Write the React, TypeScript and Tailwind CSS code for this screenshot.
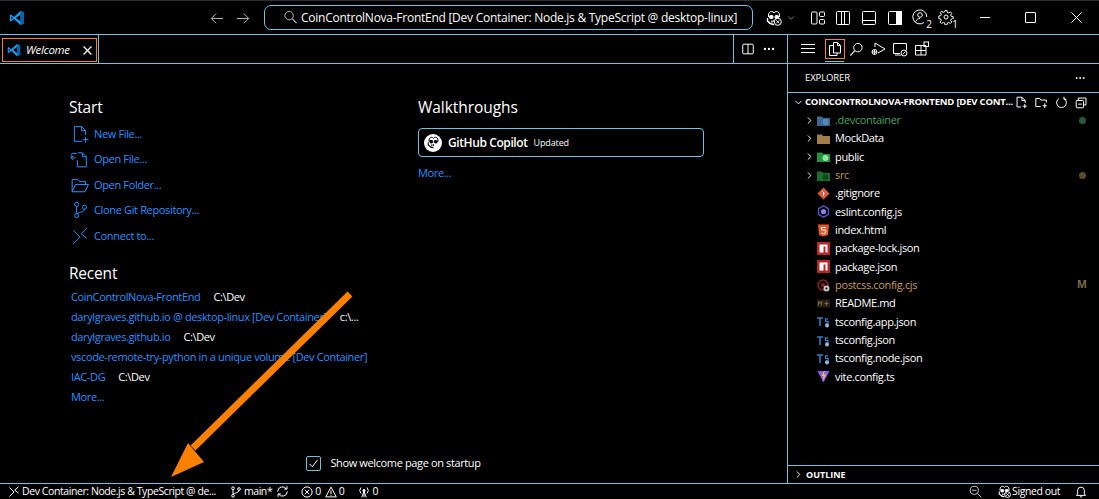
import type { ReactNode } from "react";
import { ChevronDown, ChevronRight, Ellipsis } from "lucide-react";

const font = { fontFamily: '"Open Sans", "Liberation Sans", sans-serif' };

function Ico({ size = 16, className = "", children }: { size?: number; className?: string; children: ReactNode }) {
  return (
    <svg width={size} height={size} viewBox="0 0 16 16" fill="none" stroke="currentColor" strokeWidth={16 / size} className={"shrink-0 " + className}>
      {children}
    </svg>
  );
}

function VsLogo({ size = 16 }: { size?: number }) {
  return (
    <svg width={size} height={size} viewBox="0 0 16 16" className="shrink-0">
      <path d="M11.4 1 5 7 2 4.6.8 5.3v5.4l1.2.7L5 9l6.4 6 3.6-1.6V2.6L11.4 1z" fill="#1f9cf0" />
      <path d="M11.5 4.6v6.8L6.9 8l4.6-3.4zM2.1 6.3 3.8 8 2.1 9.7V6.3z" fill="#000" />
      <path d="M11.4 1 15 2.6v10.8L11.4 15z" fill="#0065a9" />
    </svg>
  );
}

function CopilotIcon({ size = 16, badge = false }: { size?: number; badge?: boolean }) {
  return (
    <Ico size={size}>
      <path d="M2.5 7V5c0-2 1.5-3.5 3-3.5 1 0 2 .5 2.500 1.300C8.500 2 9.500 1.500 10.500 1.500c1.500 0 3 1.500 3 3.500v2" />
      <path d="M1.500 8v3c2 2.500 4 3.500 6.500 3.500" strokeWidth="1.400" />
      <rect x="3.500" y="5.500" width="3.500" height="3" rx="1" fill="currentColor" />
      <rect x="9" y="5.500" width="3.500" height="3" rx="1" fill="currentColor" />
      <path d="M6 10.500v2M8 10v2" strokeWidth="1.400" />
      {badge && (
        <>
          <circle cx="11.800" cy="11.800" r="3.500" fill="#000" />
          <path d="M10.300 10.300l3 3M13.300 10.300l-3 3" />
        </>
      )}
    </Ico>
  );
}

function TitleBar() {
  return (
    <div className="h-[35px] shrink-0 flex items-center text-white border-b border-[#6fc3df] border-t-[#2e2e2e] border-t">
      <div className="ml-[9px]"><VsLogo size={16} /></div>
      <Ico size={14} className="ml-[185px] text-[#b8b8b8]"><path d="M15 8.500H1.500M7 3l-5.500 5.500L7 14" /></Ico>
      <Ico size={14} className="ml-[12px] text-[#b8b8b8]"><path d="M1 8.500h13.500M9 3l5.500 5.500L9 14" /></Ico>
      <div className="ml-[14px] w-[489px] h-[25px] rounded-[7px] border border-[#6fc3df] flex items-center pl-[18px]">
        <Ico size={15} className="text-[#b8b8b8] -scale-x-100">
          <circle cx="9.500" cy="6" r="4.500" />
          <path d="M6.200 9.200 1.500 14" strokeWidth="1.400" />
        </Ico>
        <span className="ml-[3px] text-[12px] tracking-[-0.26px] whitespace-nowrap">
          CoinControlNova-FrontEnd [Dev Container: Node.js &amp; TypeScript @ desktop-linux]
        </span>
      </div>
      <div className="ml-[13px]"><CopilotIcon badge /></div>
      <ChevronDown size={10} strokeWidth={1.500} className="ml-[4px] text-[#c0c0c0]" />
      <Ico className="ml-[14px]">
        <rect x="1.500" y="2" width="5.500" height="12" rx="1" />
        <rect x="9.500" y="2" width="5" height="4.500" rx="1" />
        <rect x="9.500" y="9.500" width="5" height="4.500" rx="1" />
      </Ico>
      <Ico className="ml-[9px]">
        <rect x="1.500" y="1.500" width="13" height="13" rx="1" />
        <path d="M6.500 1.500v13M9.500 1.500v13" />
      </Ico>
      <Ico className="ml-[10px]">
        <rect x="1.500" y="1.500" width="13" height="13" rx="1" />
        <path d="M1.500 10.500h13" />
      </Ico>
      <Ico className="ml-[10px]">
        <rect x="1.500" y="1.500" width="13" height="13" rx="1" />
        <rect x="9.500" y="1.500" width="5" height="13" fill="currentColor" />
      </Ico>
      <div className="ml-[9px] relative w-[17px] h-[17px]">
        <Ico size={16}>
          <path d="M12 13.500A7 7 0 1 1 14.800 8" />
          <circle cx="8" cy="6" r="2.300" />
          <path d="M3.800 12.500c.6-2 2.200-3 4.200-3" />
        </Ico>
        <span className="absolute right-[-3px] bottom-[-3px] text-[10px] leading-[10px] bg-black">2</span>
      </div>
      <div className="ml-[9px] relative w-[17px] h-[17px]">
        <Ico size={16}>
          <path d="M7 1.500h2l.4 2 1.300.5 1.700-1.100 1.400 1.400-1.100 1.700.5 1.300 2 .4v2l-2 .4-.5 1.300 1.100 1.700-1.400 1.400-1.700-1.100-1.300.5-.4 2H7l-.4-2-1.300-.5-1.700 1.100-1.400-1.400 1.100-1.700-.5-1.300-2-.4V7l2-.4.5-1.300-1.100-1.700 1.400-1.400 1.700 1.100 1.300-.5z" />
          <circle cx="8" cy="8" r="2" />
        </Ico>
        <span className="absolute right-[-3px] bottom-[-3px] text-[10px] leading-[10px] bg-black">1</span>
      </div>
      <div className="ml-auto flex items-center">
        <div className="w-[10px] h-[1px] bg-white" />
        <div className="ml-[35px] w-[11px] h-[11px] border border-white rounded-[1px]" />
        <Ico size={11} className="ml-[35px] mr-[17px]"><path d="M.5.5l15 15M15.500.5l-15 15" /></Ico>
      </div>
    </div>
  );
}

function TabBar() {
  return (
    <div className="h-[29px] shrink-0 flex border-b border-[#6fc3df]">
      <div className="w-[99px] border-r border-[#6fc3df] pl-[2px] pt-[3px]">
        <div className="w-[95px] h-[24px] border border-[#f38518] flex items-center pl-[4px] pr-[4px] text-white">
          <VsLogo size={14} />
          <span className="ml-[5px] italic text-[11.500px] tracking-[-0.3px]">Welcome</span>
          <Ico size={9} className="ml-auto"><path d="M1 1l14 14M15 1 1 15" strokeWidth="2.200" /></Ico>
        </div>
      </div>
      <div className="flex-1" />
      <div className="w-[54px] border-l border-[#6fc3df] flex items-center pl-[7px] text-white">
        <Ico size={14}>
          <rect x="2" y="2.500" width="12" height="11" rx="1" />
          <path d="M8 2.500v11" />
        </Ico>
        <Ellipsis size={14} strokeWidth={2} className="ml-[7px]" />
      </div>
    </div>
  );
}

const startItems: [string, ReactNode][] = [
  ["New File...", <><path d="M9.500 1.500H3v13h7" /><path d="M9.500 1.500V5h3.500v4M9.500 1.500 13 5" /><path d="M13 10.500v5M10.500 13h5" /></>],
  ["Open File...", <><path d="M7 2.500h4l3.500 3.500v9h-8V9" /><path d="M11 2.500V6h3.500" /><path d="M6 3H2.500C1.500 3 1 4 1 5s.5 2 1.500 2H5M3 5 1 7l2 2" /></>],
  ["Open Folder...", <><path d="M1 14V3h5l1.500 2H13v2.500" /><path d="M1 14h11.500L15.500 7.500H4L1 14z" /></>],
  ["Clone Git Repository...", <><circle cx="5" cy="3" r="1.800" /><circle cx="5" cy="13" r="1.800" /><circle cx="12" cy="5.500" r="1.800" /><path d="M5 4.800v6.400M12 7.300c0 2.200-4 2.500-7 4" /></>],
  ["Connect to...", <path d="M2 15l6-6-6-6M14 1 9 6l5 4" />],
];

const recents: [string, string][] = [
  ["CoinControlNova-FrontEnd", "C:\\Dev"],
  ["darylgraves.github.io @ desktop-linux [Dev Container]", "c:\\..."],
  ["darylgraves.github.io", "C:\\Dev"],
  ["vscode-remote-try-python in a unique volume [Dev Container]", ""],
  ["IAC-DG", "C:\\Dev"],
];

function Welcome() {
  return (
    <div className="flex-1 flex flex-col min-h-0">
      <div className="flex flex-1 pl-[69px] pt-[33px]">
        <div className="w-[349px]">
          <h2 className="text-white text-[15.500px] leading-[20px] tracking-[-0.2px]">Start</h2>
          <div className="mt-[4px]">
            {startItems.map(([label, icon], i) => (
              <div key={label} className={"flex items-center h-[25.500px] text-[#2a90ff] pl-[2px] " + (i === 1 ? "-ml-[1px]" : "")}>
                <Ico size={18}>{icon}</Ico>
                <span className={"text-[11px] tracking-[-0.35px] " + (i === 1 ? "ml-[6px]" : "ml-[5px]")}>{label}</span>
              </div>
            ))}
          </div>
          <h2 className="mt-[14px] text-white text-[15.500px] leading-[20px] tracking-[-0.2px]">Recent</h2>
          <div className="mt-[5px] pl-[2px] text-[11px] tracking-[-0.37px]">
            {recents.map(([name, path]) => (
              <div key={name} className="h-[20px] flex items-center whitespace-nowrap">
                <span className="text-[#2a90ff]">{name}</span>
                {path && <span className="ml-[13px] text-white">{path}</span>}
              </div>
            ))}
            <div className="h-[20px] flex items-center text-[#2a90ff]">More...</div>
          </div>
        </div>
        <div className="w-[286px]">
          <h2 className="text-white text-[15.500px] leading-[20px] tracking-[-0.05px]">Walkthroughs</h2>
          <div className="mt-[11px] h-[29px] border border-[#6fc3df] rounded-[4px] flex items-center pl-[5px] text-white">
            <div className="w-[18px] h-[18px] rounded-full bg-white flex items-center justify-center text-black">
              <CopilotIcon size={13} />
            </div>
            <span className="ml-[6px] text-[12px] font-semibold tracking-[-0.4px]">GitHub Copilot</span>
            <span className="ml-[6px] text-[9px] tracking-[-0.15px]">Updated</span>
          </div>
          <div className="mt-[7px] text-[#2a90ff] text-[11px] leading-[18px] tracking-[-0.35px]">More...</div>
        </div>
      </div>
      <div className="h-[20px] mb-[10px] flex justify-center items-center text-white">
        <div className="w-[15px] h-[15px] border border-[#6fc3df] rounded-[2px] flex items-center justify-center">
          <Ico size={13}><path d="M3 8.500 6.500 12 13 3.500" /></Ico>
        </div>
        <span className="ml-[9px] text-[11px] tracking-[-0.37px]">Show welcome page on startup</span>
      </div>
    </div>
  );
}

function FolderIco({ color, accent }: { color: string; accent: string }) {
  return (
    <svg width="13" height="13" viewBox="0 0 13 13" className="shrink-0">
      <path d="M0 2.500h5l1 1.500h7v8H0z" fill={color} />
      <circle cx="8.500" cy="8" r="3" fill={accent} />
    </svg>
  );
}

function FileIco({ kind }: { kind: string }) {
  if (kind === "git")
    return (
      <svg width="13" height="13" viewBox="0 0 13 13" className="shrink-0">
        <path d="M6.500.5 12.500 6.500 6.500 12.500.5 6.500z" fill="#dd5a3c" />
        <path d="M5 4l2.500 2.500M6.500 6v3" stroke="#fff" strokeWidth="1" />
      </svg>
    );
  if (kind === "eslint")
    return (
      <svg width="13" height="13" viewBox="0 0 13 13" className="shrink-0">
        <path d="M6.500.8 11.500 3.600v5.800L6.500 12.200 1.500 9.400V3.600z" fill="none" stroke="#5b4fc4" strokeWidth="1.400" />
        <circle cx="6.500" cy="6.500" r="2.600" fill="#8b80e8" />
      </svg>
    );
  if (kind === "html")
    return (
      <svg width="13" height="13" viewBox="0 0 13 13" className="shrink-0">
        <path d="M1 .5h11l-1 10.500-4.500 1.500L2 11z" fill="#e5562b" />
        <path d="M9 3.500H4.300l.2 2.500H8.800l-.3 3-2 .6-2-.6" fill="none" stroke="#fff" strokeWidth="1" />
      </svg>
    );
  if (kind === "npm")
    return (
      <svg width="13" height="13" viewBox="0 0 13 13" className="shrink-0">
        <rect width="13" height="13" fill="#bb2528" />
        <path d="M2.500 2.500h8v8H8.500V4.500H6.500v6h-4z" fill="#fff" />
      </svg>
    );
  if (kind === "postcss")
    return (
      <svg width="13" height="13" viewBox="0 0 13 13" className="shrink-0">
        <circle cx="6" cy="6" r="5" fill="none" stroke="#8c1f1f" strokeWidth="1.600" />
        <circle cx="6" cy="6" r="2" fill="#8c1f1f" />
        <circle cx="9.500" cy="9.500" r="3" fill="#c8c8c8" />
        <circle cx="9.500" cy="9.500" r="1" fill="#000" />
      </svg>
    );
  if (kind === "md")
    return (
      <svg width="13" height="13" viewBox="0 0 13 13" className="shrink-0">
        <rect y="2.500" width="13" height="8" fill="#2a1f14" />
        <path d="M1.500 8.500v-4l1.500 2 1.500-2v4M7.500 6.500h4M9.500 4.500v4" fill="none" stroke="#7a6a55" strokeWidth="1" />
      </svg>
    );
  if (kind === "ts")
    return (
      <svg width="13" height="13" viewBox="0 0 13 13" className="shrink-0">
        <path d="M0 3h6M3 3v8" stroke="#2f7fc4" strokeWidth="1.600" fill="none" />
        <path d="M11 3.800H8.500v2.600H11v2.600H8.500" stroke="#2f7fc4" strokeWidth="1.300" fill="none" />
        <circle cx="10" cy="10.500" r="2" fill="#9ab8d0" />
      </svg>
    );
  return (
    <svg width="13" height="13" viewBox="0 0 13 13" className="shrink-0">
      <path d="M.5 1h12L6.500 12.500z" fill="#8a5cf6" />
      <path d="M7.500 0 4.500 6h2L5.500 11.500 9 4.500H7z" fill="#ffc61a" />
    </svg>
  );
}

type Row = { name: string; folder?: [string, string]; kind?: string; color?: string; mark?: ReactNode };

const dot = (c: string) => <span className={"block w-[7px] h-[7px] rounded-full " + c} />;

const rows: Row[] = [
  { name: ".devcontainer", folder: ["#3b6795", "#5d87b0"], color: "text-[#45a35f]", mark: dot("bg-[#2a5a3c]") },
  { name: "MockData", folder: ["#a27f48", "#a27f48"] },
  { name: "public", folder: ["#23923f", "#8ce79c"] },
  { name: "src", folder: ["#17702e", "#0e4d1e"], color: "text-[#c79a5a]", mark: dot("bg-[#5a4a30]") },
  { name: ".gitignore", kind: "git" },
  { name: "eslint.config.js", kind: "eslint" },
  { name: "index.html", kind: "html" },
  { name: "package-lock.json", kind: "npm" },
  { name: "package.json", kind: "npm" },
  { name: "postcss.config.cjs", kind: "postcss", color: "text-[#c79a5a]", mark: <span className="text-[10.500px] font-bold text-[#7d6a48]">M</span> },
  { name: "README.md", kind: "md" },
  { name: "tsconfig.app.json", kind: "ts" },
  { name: "tsconfig.json", kind: "ts" },
  { name: "tsconfig.node.json", kind: "ts" },
  { name: "vite.config.ts", kind: "vite" },
];

function ActivityRow() {
  return (
    <div className="h-[29px] shrink-0 flex items-center pl-[12px] text-white border-b border-[#6fc3df]">
      <Ico>
        <path d="M1 3.500h14M1 7.500h14M1 11.500h14" strokeWidth="1.200" />
      </Ico>
      <div className="ml-[9px] relative w-[20px] h-[20px] border border-[#f38518] flex items-center justify-center">
        <Ico size={16}>
          <path d="M6.500 1.500h4l3 3v7.500h-7z" />
          <path d="M10.500 1.500v3h3" />
          <path d="M6.500 4.500h-4v10h7.500v-2.500" />
        </Ico>
        <span className="absolute left-[-1px] right-0 bottom-[-4px] h-[1px] bg-[#6fc3df]" />
      </div>
      <Ico size={15} className="ml-[4px]">
        <circle cx="9.500" cy="6" r="4.500" />
        <path d="M6.200 9.200 1.500 14.500" strokeWidth="1.200" />
      </Ico>
      <Ico className="ml-[6px]">
        <path d="M5 2v4M5 2l10 6-7 4" />
        <circle cx="4.500" cy="11" r="2.500" />
        <path d="M4.500 8.500v5M2 11h5" />
      </Ico>
      <Ico className="ml-[6px]">
        <path d="M8 12.500H1.500v-10h13V9" />
        <path d="M3 14h6" />
        <circle cx="12" cy="12" r="3" />
        <path d="M10.500 13.500l3-3" />
      </Ico>
      <Ico className="ml-[6px]">
        <path d="M1.500 4.500h5.500v9.500H1.500zM1.500 9.500h10.500V14H7" />
        <path d="M7 4.500h5V9.500" />
        <rect x="10" y="1" width="4.500" height="4.500" />
      </Ico>
    </div>
  );
}

function Sidebar() {
  return (
    <div className="w-[312px] shrink-0 border-l border-[#6fc3df] flex flex-col text-white min-h-0">
      <ActivityRow />
      <div className="h-[29px] shrink-0 flex items-center pl-[17px] pr-[13px] border-b border-[#6fc3df] text-[9.500px] tracking-[-0.1px]">
        EXPLORER
        <Ellipsis size={12} strokeWidth={2} className="ml-auto" />
      </div>
      <div className="h-[18px] shrink-0 flex items-center pl-[5px] pr-[11px]">
        <ChevronDown size={11} strokeWidth={2} className="shrink-0" />
        <span className="ml-[1px] text-[9.500px] font-bold tracking-[-0.2px] whitespace-nowrap">COINCONTROLNOVA-FRONTEND [DEV CONT...</span>
        <div className="ml-auto flex gap-[7px]">
          <Ico size={13}><path d="M8.500 1.500H2.500v12h5M8.500 1.500v4h4v3M8.500 1.500l4 4M12 10v5M9.500 12.500h5" /></Ico>
          <Ico size={13}><path d="M1 13V3h5l1 2h7v3M1 13h6M12 9v6M9.500 12h5" /></Ico>
          <Ico size={13}><path d="M5 3a6 6 0 1 0 6 0M11 1v3h3" /></Ico>
          <Ico size={13}><rect x="1.500" y="5.500" width="9" height="9" rx="1" /><path d="M4 5V2.500h9.500V11H11M4 10h4.500" /></Ico>
        </div>
      </div>
      <div>
        {rows.map((r) => (
          <div key={r.name} className="h-[18.330px] flex items-center pl-[17px] pr-[13px]">
            <span className="w-[12px] shrink-0">{r.folder && <ChevronRight size={11} strokeWidth={2} className="-ml-[1px]" />}</span>
            {r.folder ? <FolderIco color={r.folder[0]} accent={r.folder[1]} /> : <FileIco kind={r.kind ?? ""} />}
            <span className={"ml-[5px] text-[11px] tracking-[-0.35px] " + (r.color ?? "text-white")}>{r.name}</span>
            {r.mark && <span className="ml-auto w-[8px] flex justify-center">{r.mark}</span>}
          </div>
        ))}
      </div>
      <div className="mt-auto h-[17px] shrink-0 border-t border-[#6fc3df] flex items-center pl-[5px] box-content">
        <ChevronRight size={11} strokeWidth={2} className="shrink-0" />
        <span className="ml-[2px] text-[9px] font-bold">OUTLINE</span>
      </div>
    </div>
  );
}

function StatusBar() {
  return (
    <div className="h-[15px] shrink-0 border-t border-[#6fc3df] box-content flex items-center text-white text-[10.500px] tracking-[-0.42px] whitespace-nowrap">
      <Ico size={12} className="ml-[8px]"><path d="M2 14l6-6-6-6M14 1 9 5.500l5 4" /></Ico>
      <span className="ml-[2px]">Dev Container: Node.js &amp; TypeScript @ de...</span>
      <Ico size={12} className="ml-[14px]">
        <circle cx="4" cy="3" r="1.800" /><circle cx="4" cy="13" r="1.800" /><circle cx="12" cy="4" r="1.800" />
        <path d="M4 5v6M12 6c0 3-6 3-8 5" />
      </Ico>
      <span className="ml-[2px]">main*</span>
      <Ico size={13} className="ml-[4px]"><path d="M2 8a6 6 0 0 1 11-3M14 8a6 6 0 0 1-11 3M13.500 1.500V5H10M2.500 14.500V11H6" /></Ico>
      <Ico size={12} className="ml-[12px]"><circle cx="8" cy="8" r="6.800" /><path d="M5 5l6 6M11 5l-6 6" /></Ico>
      <span className="ml-[2px]">0</span>
      <Ico size={12} className="ml-[4px]"><path d="M8 1.500 15 14.500H1z" /><path d="M8 6v5M8 12v1" /></Ico>
      <span className="ml-[2px]">0</span>
      <Ico size={12} className="ml-[14px]"><path d="M8 7v8M5 15l3-8 3 8M4 2a6 6 0 0 0 0 8M12 2a6 6 0 0 1 0 8" /><circle cx="8" cy="6" r="1.500" fill="currentColor" /></Ico>
      <span className="ml-[2px]">0</span>
      <div className="ml-auto flex items-center">
        <Ico size={13} className="text-[#c8c8c8]"><circle cx="6.500" cy="6.500" r="5" /><path d="M4 6.500h5M10 10l5 5" /></Ico>
        <span className="ml-[16px]"><CopilotIcon size={13} badge /></span>
        <span className="ml-[1px]">Signed out</span>
        <Ico size={12} className="ml-[15px] mr-[12px]"><path d="M2 12.500h12l-1.500-2V6a4.500 4.500 0 0 0-9 0v4.500zM6.500 14.500h3" /></Ico>
      </div>
    </div>
  );
}

export default function App() {
  return (
    <div className="relative w-[1099px] h-[499px] bg-black flex flex-col overflow-hidden" style={font}>
      <TitleBar />
      <div className="flex-1 flex min-h-0">
        <div className="flex-1 flex flex-col min-w-0">
          <TabBar />
          <Welcome />
        </div>
        <Sidebar />
      </div>
      <StatusBar />
      {/* annotation arrow drawn over the screenshot */}
      <svg width="1099" height="499" className="absolute inset-0 pointer-events-none">
        <path d="M350 294 193 448" stroke="#fb8000" strokeWidth="7" fill="none" />
        <path d="M171 477 188 443 204 462z" fill="#fb8000" />
      </svg>
    </div>
  );
}
